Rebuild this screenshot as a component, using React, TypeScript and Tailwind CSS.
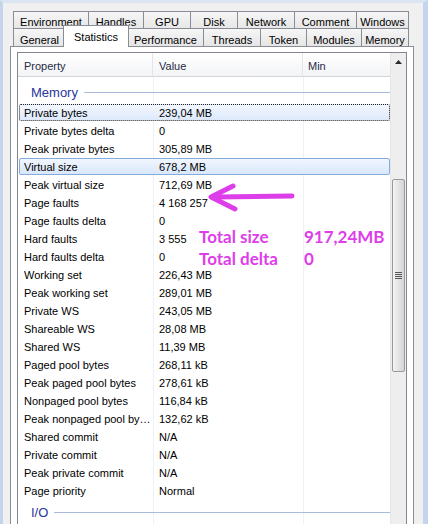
import React from "react"

const topTabs: [string, number][] = [
  ["Environment", 75],
  ["Handles", 55],
  ["GPU", 47],
  ["Disk", 47],
  ["Network", 57],
  ["Comment", 62],
  ["Windows", 53],
]

const bottomTabs: [string, number][] = [
  ["General", 52],
  ["Statistics", 62],
  ["Performance", 76],
  ["Threads", 57],
  ["Token", 46],
  ["Modules", 55],
  ["Memory", 48],
]

type Row = { name: string; value: string; state?: "focus" | "selected" }

const memoryRows: Row[] = [
  { name: "Private bytes", value: "239,04 MB", state: "focus" },
  { name: "Private bytes delta", value: "0" },
  { name: "Peak private bytes", value: "305,89 MB" },
  { name: "Virtual size", value: "678,2 MB", state: "selected" },
  { name: "Peak virtual size", value: "712,69 MB" },
  { name: "Page faults", value: "4 168 257" },
  { name: "Page faults delta", value: "0" },
  { name: "Hard faults", value: "3 555" },
  { name: "Hard faults delta", value: "0" },
  { name: "Working set", value: "226,43 MB" },
  { name: "Peak working set", value: "289,01 MB" },
  { name: "Private WS", value: "243,05 MB" },
  { name: "Shareable WS", value: "28,08 MB" },
  { name: "Shared WS", value: "11,39 MB" },
  { name: "Paged pool bytes", value: "268,11 kB" },
  { name: "Peak paged pool bytes", value: "278,61 kB" },
  { name: "Nonpaged pool bytes", value: "116,84 kB" },
  { name: "Peak nonpaged pool by…", value: "132,62 kB" },
  { name: "Shared commit", value: "N/A" },
  { name: "Private commit", value: "N/A" },
  { name: "Peak private commit", value: "N/A" },
  { name: "Page priority", value: "Normal" },
]

function GroupRow({ title }: { title: string }) {
  return (
    <div className="h-[24px] flex items-center pl-[13px]">
      <span className="text-[13px] text-[#28359a] leading-none">{title}</span>
      <div className="flex-1 h-px bg-[#a9bcdc] ml-[6px]" />
    </div>
  )
}

function ListRow({ row }: { row: Row }) {
  // focus = dotted rect, selected = blue box
  const box =
    row.state === "selected"
      ? "border-[#84acdd] bg-gradient-to-b from-[#f1f6fe] to-[#d9e7fb]"
      : row.state === "focus"
        ? "border-dotted border-[#222] bg-gradient-to-b from-[#f3f7fe] to-[#dde9fb]"
        : "border-transparent"
  return (
    <div className="h-[18px]">
      <div className={`h-[17px] ml-[1px] border rounded-[2px] flex items-center pt-px ${box}`}>
        <div className="w-[134px] pl-[4px] whitespace-nowrap overflow-hidden">{row.name}</div>
        <div className="w-[150px] pl-[5px] whitespace-nowrap">{row.value}</div>
        <div className="flex-1" />
      </div>
    </div>
  )
}

function Scrollbar() {
  return (
    <div className="w-[16px] bg-[#eeeeee] border-l border-[#e6e6e6] flex flex-col">
      <div className="h-[17px] flex items-center justify-center">
        <svg width="7" height="4" viewBox="0 0 7 4">
          <path d="M3.5 0 L7 4 L0 4 Z" fill="#2b2b2b" />
        </svg>
      </div>
      <div className="mt-[109px] h-[193px] mx-px rounded-[2px] border border-[#9a9a9a] bg-gradient-to-r from-[#f3f3f3] via-[#e4e4e4] to-[#d4d4d4] flex items-center justify-center">
        <svg width="7" height="7" viewBox="0 0 7 7">
          <path d="M0 0.5 H7 M0 2.5 H7 M0 4.5 H7 M0 6.5 H7" stroke="#555" strokeWidth="1" />
        </svg>
      </div>
    </div>
  )
}

export default function App() {
  return (
    <div className="relative w-[428px] h-[524px] overflow-hidden bg-[#f0f0f0] border-l-[3px] border-r-[5px] border-t-[3px] border-l-[#c4d4ec] border-r-[#c4d4ec] border-t-[#dae4f3] font-['Liberation_Sans',Arial,sans-serif] text-[11px] text-black">
      {/* tab strip */}
      <div className="pt-[8px] ml-[10px] w-[396px]">
        <div className="flex h-[17px]">
          {topTabs.map(([label, w], i) => (
            <div
              key={label}
              style={{ width: w }}
              className={`h-[18px] shrink-0 border-t border-l border-[#898c95] bg-gradient-to-b from-[#f6f6f6] to-[#e6e6e6] flex justify-center pt-[2px] ${i === topTabs.length - 1 ? "border-r" : ""}`}
            >
              {label}
            </div>
          ))}
        </div>
        <div className="flex h-[18px] relative">
          {bottomTabs.map(([label, w], i) =>
            label === "Statistics" ? (
              <div
                key={label}
                style={{ width: w + 4 }}
                className="relative z-10 -mx-[2px] -mt-[3px] h-[22px] shrink-0 border-t border-x border-[#898c95] bg-white flex justify-center pt-[3px]"
              >
                {label}
              </div>
            ) : (
              <div
                key={label}
                style={{ width: w }}
                className={`h-[18px] shrink-0 border-t border-l border-[#898c95] bg-gradient-to-b from-[#f6f6f6] to-[#e6e6e6] flex justify-center pt-[3px] ${i === bottomTabs.length - 1 ? "border-r" : ""}`}
              >
                {label}
              </div>
            ),
          )}
        </div>
      </div>

      {/* tab panel */}
      <div className="ml-[7px] w-[404px] h-[600px] border border-[#898c95] bg-white px-[6px] pt-[5px]">
        <div className="h-[580px] border border-[#828790] flex overflow-hidden">
          <div className="w-[372px] flex flex-col">
            <div className="h-[24px] flex border-b border-[#d5d5d5] bg-gradient-to-b from-[#ffffff] to-[#f3f4f6] text-[#1f2a44]">
              <div className="w-[135px] pl-[6px] pt-[3px] border-r border-[#e3e5e8] flex items-center">Property</div>
              <div className="w-[150px] pl-[6px] pt-[3px] border-r border-[#e3e5e8] flex items-center">Value</div>
              <div className="flex-1 pl-[5px] pt-[3px] flex items-center">Min</div>
            </div>
            <div className="flex-1 pt-[3px] bg-[linear-gradient(to_right,transparent_135px,#eef1f7_135px,#eef1f7_136px,transparent_136px,transparent_285px,#eef1f7_285px,#eef1f7_286px,transparent_286px)]">
              <GroupRow title="Memory" />
              {memoryRows.map((r) => (
                <ListRow key={r.name} row={r} />
              ))}
              <GroupRow title="I/O" />
            </div>
          </div>
          <Scrollbar />
        </div>
      </div>

      {/* pink annotation drawn over the list */}
      <svg
        className="absolute left-[197px] top-[175px]"
        width="100"
        height="36"
        viewBox="197 175 100 36"
      >
        <path d="M214 194 L289 193" stroke="#dd3ee9" strokeWidth="5" strokeLinecap="round" fill="none" />
        <path d="M230 183 L208 194 L232 206" stroke="#dd3ee9" strokeWidth="5" strokeLinecap="round" strokeLinejoin="round" fill="none" />
      </svg>
      <div className="absolute left-[196px] top-[223px] grid grid-cols-[105px_auto] font-['Lato','Open_Sans',sans-serif] font-bold text-[17px] leading-[22px] text-[#dd3ee9]">
        <span>Total size</span>
        <span>917,24MB</span>
        <span>Total delta</span>
        <span>0</span>
      </div>
    </div>
  )
}
